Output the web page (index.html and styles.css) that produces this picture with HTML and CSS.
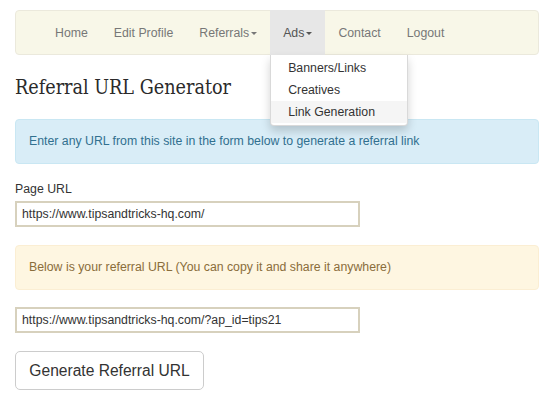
FILE: index.html
```html
<!DOCTYPE html>
<html>
<head>
<meta charset="utf-8">
<link rel="stylesheet" href="styles.css">
</head>
<body>
<div class="page">
  <nav class="navbar">
    <ul class="nav">
      <li><a class="nav-link" href="#">Home</a></li>
      <li><a class="nav-link" href="#">Edit Profile</a></li>
      <li><a class="nav-link" href="#">Referrals<span class="caret"></span></a></li>
      <li class="open"><a class="nav-link active" href="#">Ads<span class="caret"></span></a>
        <ul class="dropdown">
          <li><a class="dd-link" href="#">Banners/Links</a></li>
          <li><a class="dd-link" href="#">Creatives</a></li>
          <li><a class="dd-link hover" href="#">Link Generation</a></li>
        </ul>
      </li>
      <li><a class="nav-link" href="#">Contact</a></li>
      <li><a class="nav-link" href="#">Logout</a></li>
    </ul>
  </nav>

  <h3 class="title">Referral URL Generator</h3>

  <div class="alert alert-info">Enter any URL from this site in the form below to generate a referral link</div>

  <label class="label">Page URL</label>
  <input class="field" type="text" value="https://www.tipsandtricks-hq.com/">

  <div class="alert alert-warning">Below is your referral URL (You can copy it and share it anywhere)</div>

  <input class="field" type="text" value="https://www.tipsandtricks-hq.com/?ap_id=tips21">

  <button class="btn">Generate Referral URL</button>
</div>
</body>
</html>
```
FILE: styles.css
```css
* { box-sizing: border-box; }
body {
  margin: 0;
  background: #fff;
  font-family: "Liberation Sans", Arial, sans-serif;
  font-size: 12.3px;
  line-height: 1.43;
  color: #333;
}
.page {
  width: 539px;
  padding: 10px 0 0 15px;
}
.navbar {
  height: 45px;
  background: #f8f7e8;
  border: 1px solid #ebe9dc;
  border-radius: 4px;
  margin-bottom: 22px;
}
.nav {
  list-style: none;
  margin: -1px 0 0 26px;
  padding: 0;
  display: flex;
  height: 45px;
}
.nav > li { position: relative; }
.nav-link {
  display: block;
  height: 45px;
  padding: 2px 13px 0;
  line-height: 43px;
  color: #777;
  text-decoration: none;
}
.nav-link.active { background: #e7e7e7; color: #555; }
.caret {
  display: inline-block;
  width: 0;
  height: 0;
  margin-left: 2px;
  vertical-align: middle;
  border-top: 3.5px solid #777;
  border-left: 3.5px solid transparent;
  border-right: 3.5px solid transparent;
}
.active .caret { border-top-color: #555; }
.dropdown {
  position: absolute;
  top: 45px;
  left: 0;
  width: 138px;
  list-style: none;
  margin: 0;
  padding: 2px 0;
  background: #fff;
  border: 1px solid rgba(0,0,0,0.15);
  border-top: 0;
  border-radius: 0 0 4px 4px;
  box-shadow: 0 5px 10px rgba(0,0,0,0.175);
  z-index: 10;
}
.dd-link {
  display: block;
  height: 22px;
  line-height: 22px;
  padding: 0 17px;
  color: #333;
  text-decoration: none;
  white-space: nowrap;
}
.dd-link.hover { background: #f5f5f5; }
.title {
  font-family: "DejaVu Serif Condensed", "DejaVu Serif", serif;
  font-weight: normal;
  font-size: 19.6px;
  line-height: 1.1;
  color: #2a2a2a;
  margin: 0 0 20px 0;
}
.alert {
  width: 524px;
  padding: 13px 13px;
  border: 1px solid transparent;
  border-radius: 4px;
  margin-bottom: 17px;
}
.alert-info {
  background: #d9edf7;
  border-color: #c9e7f3;
  color: #31708f;
}
.alert-warning {
  background: #fef6e1;
  border-color: #fbeed3;
  color: #8a6d3b;
}
.label {
  display: block;
  margin-bottom: 2px;
  color: #333;
}
.field {
  display: block;
  width: 345px;
  height: 26px;
  border: 2px solid #d7d1bd;
  padding: 0 5px;
  font-family: "Liberation Sans", Arial, sans-serif;
  font-size: 12.3px;
  color: #333;
  background: #fff;
  margin-bottom: 18px;
  outline: none;
}
.btn {
  display: block;
  width: 189px;
  height: 39px;
  font-family: "Liberation Sans", Arial, sans-serif;
  font-size: 15.6px;
  color: #333;
  background: #fff;
  border: 1px solid #ccc;
  border-radius: 5px;
  padding: 0;
}
```
